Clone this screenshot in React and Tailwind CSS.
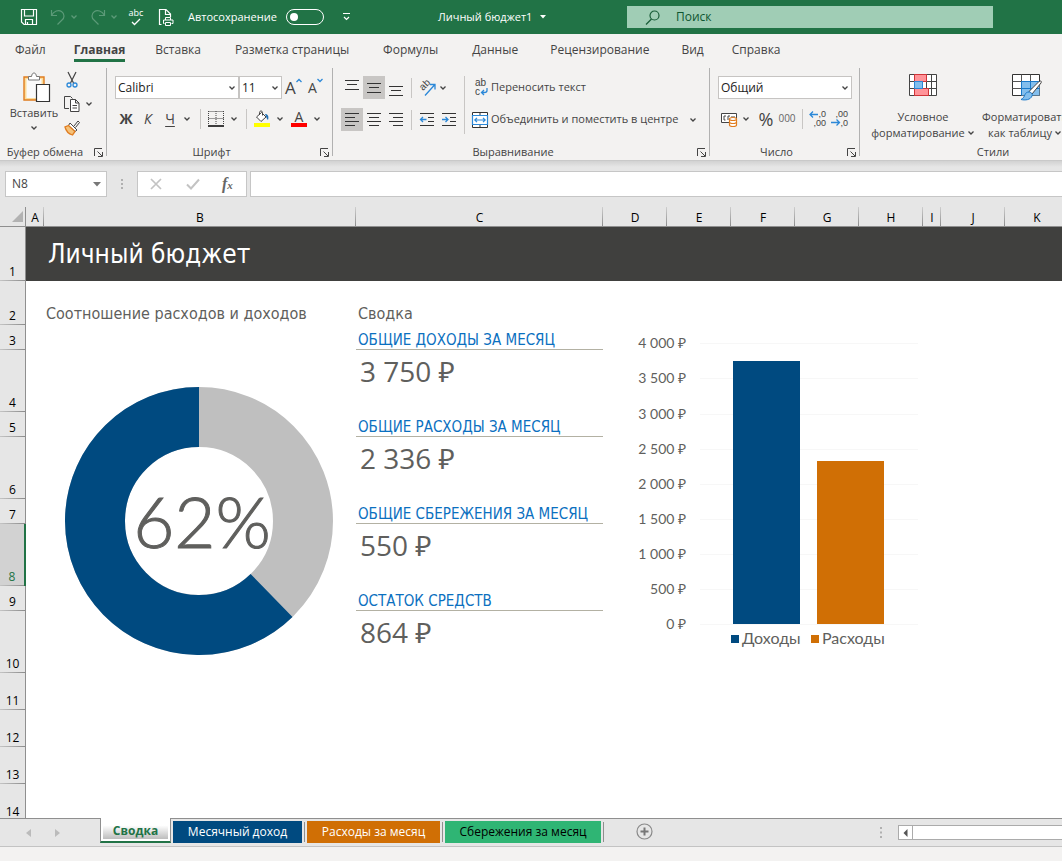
import React from "react";

const TABS = [
  ["Файл", "mr-7"],
  ["Главная", "mr-[30px]"],
  ["Вставка", "mr-[34px]"],
  ["Разметка страницы", "mr-[34px]"],
  ["Формулы", "mr-[34px]"],
  ["Данные", "mr-8"],
  ["Рецензирование", "mr-8"],
  ["Вид", "mr-7"],
  ["Справка", ""],
];

const COLUMNS = [
  ["A", "w-[18px]"],
  ["B", "w-[312px]"],
  ["C", "w-[247px]"],
  ["D", "w-[64px]"],
  ["E", "w-[64px]"],
  ["F", "w-[64px]"],
  ["G", "w-[64px]"],
  ["H", "w-[64px]"],
  ["I", "w-[18px]"],
  ["J", "w-[64px]"],
  ["K", ""],
];

const SUMMARY = [
  ["ОБЩИЕ ДОХОДЫ ЗА МЕСЯЦ", "3 750 ₽"],
  ["ОБЩИЕ РАСХОДЫ ЗА МЕСЯЦ", "2 336 ₽"],
  ["ОБЩИЕ СБЕРЕЖЕНИЯ ЗА МЕСЯЦ", "550 ₽"],
  ["ОСТАТОК СРЕДСТВ", "864 ₽"],
];

const AXIS = ["4 000 ₽", "3 500 ₽", "3 000 ₽", "2 500 ₽", "2 000 ₽", "1 500 ₽", "1 000 ₽", "500 ₽", "0 ₽"];

function Icon({ w = 16, h = 16, children, className = "" }) {
  return (
    <svg width={w} height={h} viewBox={`0 0 ${w} ${h}`} fill="none" aria-hidden="true" className={`shrink-0 overflow-visible ${className}`}>
      {children}
    </svg>
  );
}

function Chevron({ className = "text-[#444]" }) {
  return (
    <Icon w={8} h={6} className={className}>
      <path d="M1.5 1.5 4 4l2.5-2.5" stroke="currentColor" strokeWidth="1.3" />
    </Icon>
  );
}

function Launcher({ label }) {
  return (
    <button aria-label={label} className="flex h-4 w-4 shrink-0 items-center justify-center">
      <Icon w={9} h={9}>
        <path d="M.5 8V.5H8M3.5 3.5 8 8M8.5 4v4.5H4" stroke="#444" />
      </Icon>
    </button>
  );
}

function Group({ title, width, children, last }) {
  return (
    <section className={`flex shrink-0 items-center ${width}`}>
      <div className="flex h-[96px] min-w-0 flex-1 flex-col pt-1">
        <div className="flex-1">{children}</div>
        <div className="flex h-4 items-center">
          <span className="flex-1 text-center text-[11px] leading-4">{title}</span>
          {!last && <Launcher label={`Параметры: ${title}`} />}
        </div>
      </div>
      {!last && <span className="h-[88px] w-px bg-[#b1b1b1]" />}
    </section>
  );
}

function Divider({ className = "h-[20px] bg-[#c8c6c4]" }) {
  return <span className={`w-px shrink-0 ${className}`} />;
}

function Lines({ rows }) {
  return (
    <Icon w={14} h={16}>
      {rows.map(([y, x, w]) => (
        <rect key={y} x={x} y={y} width={w} height="1" fill="#333" />
      ))}
    </Icon>
  );
}

function IconButton({ label, active, children }) {
  return (
    <button aria-label={label} aria-pressed={active} className={`flex h-[23px] w-[22px] shrink-0 items-center justify-center ${active ? "bg-[#c8c6c4]" : ""}`}>
      {children}
    </button>
  );
}

function DropSelect({ label, value, width }) {
  return (
    <span className={`relative flex h-[23px] ${width}`}>
      <select aria-label={label} defaultValue={value} className="h-full w-full appearance-none border border-[#c6c4c2] bg-white pl-[2px] text-xs text-[#222] outline-none">
        <option>{value}</option>
      </select>
      <span className="pointer-events-none absolute right-[3px] top-[9px]">
        <Chevron />
      </span>
    </span>
  );
}

function TitleBar() {
  return (
    <header className="flex h-[34px] shrink-0 items-center overflow-hidden whitespace-nowrap bg-[#217346] text-[11px] text-white">
      <div className="flex w-[438px] shrink-0 items-center pl-[21px]">
        <button aria-label="Сохранить">
          <Icon>
            <path d="M.5.5h15v15H3L.5 13V.5ZM3.5.5V7h9V.5M4.500 15.500v-5h7v5M6.500 15.500v-2.500" stroke="white" strokeWidth="1.200" />
          </Icon>
        </button>
        <button aria-label="Отменить" className="ml-[13px] flex items-center gap-1 text-[#5c9a78]">
          <Icon>
            <path d="M1.500 1v5.500H7M1.500 6.500C4 2 8.500.5 11.500 2.500c3.500 2.400 3 6.500.5 8.500l-4.500 4.500" stroke="currentColor" strokeWidth="1.200" />
          </Icon>
          <Chevron className="text-[#5c9a78]" />
        </button>
        <button aria-label="Вернуть" className="ml-3 flex items-center gap-1 text-[#5c9a78]">
          <Icon>
            <path d="M14.500 1v5.500H9M14.500 6.500C12 2 7.500.5 4.500 2.500 1 4.900 1.500 9 4 11l4.500 4.500" stroke="currentColor" strokeWidth="1.200" />
          </Icon>
          <Chevron className="text-[#5c9a78]" />
        </button>
        <button aria-label="Орфография" className="ml-2 flex w-[20px] flex-col items-center">
          <span className="text-[9px] leading-[10px]">abc</span>
          <Icon w={10} h={8}>
            <path d="M1 4l2.500 2.500L9 1" stroke="white" strokeWidth="1.300" />
          </Icon>
        </button>
        <button aria-label="Предварительный просмотр" className="ml-3">
          <Icon w={16} h={17}>
            <path d="M3.500 15.500h-2V.5h6.500L12.500 5v3M7.500.5v5h5" stroke="white" strokeWidth="1.200" />
            <path d="M6.500 14.500h-1V11h9.500v3.500h-1.500M7.500 11V8.500h5V11M7.500 13.500h5v3h-5z" stroke="white" />
          </Icon>
        </button>
        <label htmlFor="autosave" className="ml-[14px] w-[98px]">Автосохранение</label>
        <input
          id="autosave"
          type="checkbox"
          role="switch"
          className="relative h-4 w-[38px] shrink-0 appearance-none rounded-full border border-white before:absolute before:left-[3px] before:top-[3px] before:h-2 before:w-2 before:rounded-full before:bg-white"
        />
        <button aria-label="Настройка панели" className="ml-[18px]">
          <Icon w={9} h={8}>
            <path d="M1 .5h7M2 4l2.500 2.500L7 4" stroke="white" strokeWidth="1.200" />
          </Icon>
        </button>
      </div>
      <button className="flex w-[189px] shrink-0 items-center gap-2">
        <span>Личный бюджет1</span>
        <Icon w={6} h={4}>
          <path d="M0 0h6L3 3.500z" fill="white" />
        </Icon>
      </button>
      <label className="mr-[69px] flex h-[22px] min-w-0 flex-1 items-center gap-4 bg-[#a0cdb5] pl-[18px]">
        <Icon w={15} h={15}>
          <circle cx="9.500" cy="5.500" r="4.500" stroke="#185c37" strokeWidth="1.200" />
          <path d="M6.500 9 1 14.500" stroke="#185c37" strokeWidth="1.200" />
        </Icon>
        <input type="search" aria-label="Поиск" placeholder="Поиск" className="min-w-0 flex-1 bg-transparent text-xs outline-none placeholder:text-[#0f5530] placeholder:opacity-100" />
      </label>
    </header>
  );
}

function RibbonTabs() {
  return (
    <nav className="flex h-[30px] shrink-0 overflow-hidden whitespace-nowrap pl-[15px] text-xs leading-4">
      {TABS.map(([name, gap]) => (
        <a key={name} href="#" className={`mb-[2px] pt-2 ${gap} ${name === "Главная" ? "border-b-[3px] border-[#217346] font-bold" : ""}`}>
          {name}
        </a>
      ))}
    </nav>
  );
}

function ClipboardGroup() {
  return (
    <div className="flex pl-[9px] pt-[4px]">
      <button className="flex w-[50px] flex-col items-center text-[11px] leading-4">
        <Icon w={28} h={31} className="ml-[6px]">
          <path d="M1 5h20v23H1z" fill="#fbdc9a" stroke="#e07c1f" strokeWidth="1.400" />
          <path d="M3.500 7h15v19h-15z" fill="#fafafa" />
          <path d="M5.500 8V4.500h3C9 2 9.500 1 11 1s2 1 2.500 3.500h3V8z" fill="#fff" stroke="#777" />
          <path d="M13.500 12.500h13v17h-13z" fill="#fff" stroke="#333" strokeWidth="1.200" />
        </Icon>
        <span className="mt-[2px]">Вставить</span>
        <span className="mt-1"><Chevron /></span>
      </button>
      <div className="ml-[5px] flex flex-col gap-2">
        <button aria-label="Вырезать" className="h-4">
          <Icon>
            <path d="M4 0l5.500 11M12 0 6.500 11" stroke="#444" strokeWidth="1.200" />
            <circle cx="5" cy="13" r="2" stroke="#2b88d8" strokeWidth="1.300" />
            <circle cx="11" cy="13" r="2" stroke="#2b88d8" strokeWidth="1.300" />
          </Icon>
        </button>
        <button aria-label="Копировать" className="flex h-4 items-center gap-[5px]">
          <Icon>
            <path d="M5 12.500H.5V.5h6l2 2" stroke="#444" />
            <path d="M6.500 3.500h5l3.500 3.500v8.500H6.500zM11.500 3.500V7H15M8.500 9.500h4.500M8.500 12h4.500" fill="#fff" stroke="#444" />
          </Icon>
          <Chevron />
        </button>
        <button aria-label="Формат по образцу" className="h-4">
          <Icon>
            <path d="M10 6l4-5 1.500 1.500-4 5" stroke="#444" />
            <path d="M6 3l7 7-2 1.500-6.500-6z" fill="#fff" stroke="#444" />
            <path d="M4.500 5.500 1 7c1 4 4 7 7.500 8l2.500-3.500z" fill="#f5c27a" stroke="#e07c1f" strokeWidth="1.300" />
          </Icon>
        </button>
      </div>
    </div>
  );
}

function FontGroup() {
  return (
    <div className="flex flex-col gap-2 pl-2 pt-2">
      <div className="flex items-center">
        <DropSelect label="Шрифт" value="Calibri" width="w-[124px]" />
        <DropSelect label="Размер шрифта" value="11" width="w-[43px]" />
        <button aria-label="Увеличить размер шрифта" className="ml-[3px] flex w-[18px] text-[17px] leading-5">
          A<Icon w={6} h={5}><path d="M.5 4 3 1.500 5.500 4" stroke="#2b88d8" strokeWidth="1.300" /></Icon>
        </button>
        <button aria-label="Уменьшить размер шрифта" className="ml-[5px] flex text-sm leading-5">
          A<Icon w={6} h={5}><path d="M.5 1 3 3.500 5.500 1" stroke="#2b88d8" strokeWidth="1.300" /></Icon>
        </button>
      </div>
      <div className="flex h-[23px] items-center text-sm">
        <button aria-label="Полужирный" className="w-[22px] font-bold">Ж</button>
        <button aria-label="Курсив" className="w-[22px] italic">К</button>
        <button aria-label="Подчёркнутый" className="w-[22px] underline underline-offset-2">Ч</button>
        <span className="ml-[2px] flex w-[17px]"><Chevron /></span>
        <Divider />
        <button aria-label="Границы" className="ml-[7px] flex items-center gap-[6px]">
          <Icon>
            <path d="M.5.5h15M.5 7.500h15M.5 0v14M8 0v14M15.500 0v14" stroke="#444" strokeDasharray="1 1" />
            <path d="M0 15h16" stroke="#000" strokeWidth="1.500" />
          </Icon>
          <Chevron />
        </button>
        <span className="w-2" />
        <Divider />
        <button aria-label="Цвет заливки" className="ml-[7px] flex items-center gap-[6px]">
          <Icon w={16} h={17}>
            <path d="M7.500 2.500 12 7l-5 4.500L2.500 7z" fill="#fff" stroke="#444" />
            <path d="M5.500 5V2.500C5.500.5 8.500.5 8.500 2.500v3" stroke="#444" />
            <path d="M11 4c3 0 4 2.500 3 6-1.500-1-1.500-3-3-6z" fill="#1f6fb5" />
            <path d="M0 13h16v4H0z" fill="#ff0" />
          </Icon>
          <Chevron />
        </button>
        <button aria-label="Цвет текста" className="ml-[7px] flex items-center gap-[6px]">
          <span className="flex w-4 flex-col items-center">
            <span className="text-sm leading-[13px]">A</span>
            <span className="h-1 w-4 bg-[#f00]" />
          </span>
          <Chevron />
        </button>
      </div>
    </div>
  );
}

function AlignGroup() {
  return (
    <div className="flex pl-2 pt-2">
      <div className="flex w-[123px] flex-col gap-[9px]">
        <div className="flex items-center">
          <IconButton label="По верхнему краю"><Lines rows={[[0, 0, 14], [4, 2, 10], [9, 0, 14]]} /></IconButton>
          <IconButton label="По середине" active><Lines rows={[[3, 0, 14], [7, 2, 10], [12, 0, 14]]} /></IconButton>
          <IconButton label="По нижнему краю"><Lines rows={[[6, 0, 14], [10, 2, 10], [15, 0, 14]]} /></IconButton>
          <span className="w-[4px]" />
          <Divider />
          <button aria-label="Ориентация" className="ml-[7px] flex items-center gap-[3px]">
            <Icon w={17} h={16}>
              <text x="0" y="0" transform="translate(4 11) rotate(-45)" fontSize="10" fill="#444" fontFamily="Liberation Sans">ab</text>
              <path d="M6 15.500 15.500 5M11 4.500h5v5" stroke="#2b88d8" strokeWidth="1.300" />
            </Icon>
            <Chevron />
          </button>
        </div>
        <div className="flex items-center">
          <IconButton label="По левому краю" active><Lines rows={[[1, 0, 14], [5, 0, 10], [9, 0, 14], [13, 0, 10]]} /></IconButton>
          <IconButton label="По центру"><Lines rows={[[1, 0, 14], [5, 2, 10], [9, 0, 14], [13, 2, 10]]} /></IconButton>
          <IconButton label="По правому краю"><Lines rows={[[1, 0, 14], [5, 4, 10], [9, 0, 14], [13, 4, 10]]} /></IconButton>
          <span className="w-[4px]" />
          <Divider />
          <span className="w-1" />
          <IconButton label="Уменьшить отступ">
            <Icon w={14} h={16}>
              <path d="M0 1.500h14M8 5.500h6M8 9.500h6M0 13.500h14" stroke="#333" />
              <path d="M.5 7.500h6M3 5 .5 7.500 3 10" stroke="#2b88d8" strokeWidth="1.300" />
            </Icon>
          </IconButton>
          <IconButton label="Увеличить отступ">
            <Icon w={14} h={16}>
              <path d="M0 1.500h14M8 5.500h6M8 9.500h6M0 13.500h14" stroke="#333" />
              <path d="M0 7.500h6M3.500 5 6 7.500 3.500 10" stroke="#2b88d8" strokeWidth="1.300" />
            </Icon>
          </IconButton>
        </div>
      </div>
      <Divider className="h-[58px] bg-[#c8c6c4]" />
      <div className="ml-[7px] flex flex-col gap-[9px] text-[11px]">
        <button className="flex h-[23px] items-center gap-[3px]">
          <Icon>
            <text x="3" y="6" fontSize="10" fill="#444" fontFamily="Liberation Sans">ab</text>
            <text x="3" y="15" fontSize="10" fill="#444" fontFamily="Liberation Sans">c</text>
            <path d="M15 8v2.500c0 1.500-1 2-2.500 2H9.500M12 10l-2.500 2.500L12 15" stroke="#2b88d8" strokeWidth="1.300" />
          </Icon>
          Переносить текст
        </button>
        <button className="flex h-[23px] items-center gap-[3px]">
          <Icon>
            <path d="M.5.5h15v15H.5zM8 0v3M8 13v3" fill="#fff" stroke="#333" />
            <path d="M.5 3.500h15v9H.5z" fill="#fff" stroke="#2b88d8" strokeWidth="1.200" />
            <path d="M3 8h10M5 5.800 2.800 8 5 10.200M11 5.800 13.200 8 11 10.200" stroke="#2b88d8" strokeWidth="1.200" />
          </Icon>
          <span className="w-[195px] text-left">Объединить и поместить в центре</span>
          <Chevron />
        </button>
      </div>
    </div>
  );
}

function NumberGroup() {
  return (
    <div className="flex flex-col gap-2 pl-2 pt-2">
      <DropSelect label="Числовой формат" value="Общий" width="w-[134px]" />
      <div className="flex h-[23px] items-center">
        <button aria-label="Финансовый формат" className="ml-[3px] flex items-center gap-[4px]">
          <Icon w={17} h={16}>
            <path d="M.5 2.500h15v9H.5z" fill="#fff" stroke="#444" />
            <path d="M5 5H3v4h1.500M7 9V5h2M11 5v2M13 5v2" stroke="#444" />
            <path d="M8.500 8v6c0 2 7 2 7 0V8z" fill="#fff" stroke="#e07c1f" strokeWidth="1.200" />
            <ellipse cx="12" cy="8" rx="3.500" ry="1.500" fill="#fff" stroke="#e07c1f" strokeWidth="1.200" />
            <path d="M8.500 11c0 2 7 2 7 0" stroke="#e07c1f" strokeWidth="1.200" />
          </Icon>
          <Chevron />
        </button>
        <button aria-label="Процентный формат" className="ml-[6px] w-[20px] text-lg">%</button>
        <button aria-label="Формат с разделителями" className="w-[22px] text-[10px] text-[#666]">000</button>
        <span className="w-[4px]" />
        <Divider />
        <button aria-label="Увеличить разрядность" className="ml-[6px]">
          <Icon w={17} h={17}>
            <text x="17" y="7" textAnchor="end" fontSize="9" fill="#444" fontFamily="Liberation Sans">,0</text>
            <text x="17" y="16" textAnchor="end" fontSize="9" fill="#444" fontFamily="Liberation Sans">,00</text>
            <path d="M1 4.500h8M4 1.500l-3 3 3 3" stroke="#2b88d8" strokeWidth="1.300" />
          </Icon>
        </button>
        <button aria-label="Уменьшить разрядность" className="ml-[5px]">
          <Icon w={17} h={17}>
            <text x="17" y="7" textAnchor="end" fontSize="9" fill="#444" fontFamily="Liberation Sans">,00</text>
            <text x="17" y="16" textAnchor="end" fontSize="9" fill="#444" fontFamily="Liberation Sans">,0</text>
            <path d="M0 12.500h8M5.500 9.500l3 3-3 3" stroke="#2b88d8" strokeWidth="1.300" />
          </Icon>
        </button>
      </div>
    </div>
  );
}

function StylesGroup() {
  return (
    <div className="flex pl-2 pt-[5px] text-[11px] leading-4">
      <button className="flex w-[110px] flex-col items-center">
        <Icon w={28} h={24}>
          <path d="M.5 1.500h27v21H.5zM.5 8.500h27M.5 15.500h27M5.500 1.500v21M17.500 1.500v21M22.500 1.500v21" fill="#fff" stroke="#444" />
          <path d="M5.500 1.500h12v7h-12zM5.500 15.500h14v7h-14z" fill="#ff9499" stroke="#d13438" />
          <path d="M5.500 8.500h8v7h-8z" fill="#83beec" stroke="#2b88d8" />
        </Icon>
        <span className="mt-3">Условное</span>
        <span className="flex items-center gap-[2px]">форматирование <Chevron /></span>
      </button>
      <button className="flex w-[94px] flex-col items-center">
        <Icon w={32} h={28} className="-mb-1 ml-1">
          <path d="M1.500 1.500h27v21h-27z" fill="#fff" stroke="#333" />
          <path d="M10.500 8.500h18v14h-18z" fill="#83beec" />
          <path d="M1.500 8.500h27M1.500 15.500h27M10.500 1.500v21M19.500 1.500v21" stroke="#555" />
          <path d="M10.500 8.500h18M10.500 15.500h18M10.500 8.500v14M19.500 8.500v14" stroke="#1979ca" />
          <path d="M29.500 8c1 0 1 1 .5 2L21 21l-3-2.500L28 8.500z" fill="#fff" stroke="#444" />
          <path d="M18 19c2 0 4 2 3 4-1.500 4-7 4.500-11 3.500 3-1.500 3-3 4-5 .8-1.700 2-2.500 4-2.500z" fill="#83beec" stroke="#1979ca" />
        </Icon>
        <span className="mt-3">Форматировать</span>
        <span className="flex items-center gap-[2px]">как таблицу <Chevron /></span>
      </button>
    </div>
  );
}

function FormulaBar() {
  return (
    <div className="flex h-[47px] shrink-0 items-start border-t border-[#c9c9c9] bg-[linear-gradient(to_bottom,#d2d2d2,#e6e6e6_6px)] pl-[5px] pt-[10px]">
      <label className="flex h-[26px] w-[102px] shrink-0 items-center border border-[#c6c6c6] bg-white px-[6px]">
        <input aria-label="Поле имени" defaultValue="N8" className="w-[81px] bg-transparent text-xs text-[#444] outline-none" />
        <Icon w={8} h={5}><path d="M0 0h8L4 4.500z" fill="#777" /></Icon>
      </label>
      <Icon w={30} h={26}>
        <path d="M14 8h2v2h-2zM14 12h2v2h-2zM14 16h2v2h-2z" fill="#b0b0b0" />
      </Icon>
      <div className="flex h-[26px] w-[110px] shrink-0 items-center border border-[#c6c6c6] bg-white pl-[12px]">
        <button aria-label="Отмена"><Icon w={12} h={12}><path d="M1 1l10 10M11 1 1 11" stroke="#c3c3c3" strokeWidth="1.700" /></Icon></button>
        <button aria-label="Ввод" className="ml-6"><Icon w={14} h={12}><path d="M1 6.500 5 10.500 13 1.500" stroke="#c3c3c3" strokeWidth="2" /></Icon></button>
        <button aria-label="Вставить функцию" className="ml-[22px] font-['Liberation_Serif',serif] text-base font-bold italic leading-5 text-[#666]">f<span className="text-[11px]">x</span></button>
      </div>
      <input aria-label="Строка формул" className="ml-[3px] h-[26px] min-w-0 flex-1 border border-r-0 border-[#c6c6c6] bg-white px-2 text-xs outline-none" />
    </div>
  );
}

function DonutChart() {
  return (
    <svg width="312" height="348" viewBox="0 0 312 348" role="img" aria-label="Соотношение расходов и доходов" className="block">
      <circle cx="155" cy="196" r="104" fill="none" stroke="#bfbfbf" strokeWidth="60" />
      <circle cx="155" cy="196" r="104" fill="none" stroke="#004a80" strokeWidth="60" pathLength="100" strokeDasharray="62.290 37.710" transform="rotate(45.760 155 196)" />
      <text x="158" y="223" textAnchor="middle" fontFamily="Lato, sans-serif" fontWeight="300" fontSize="71" fill="#5f5f5d" stroke="#5f5f5d" strokeWidth="1">62%</text>
    </svg>
  );
}

function BarChart() {
  return (
    <svg width="320" height="348" viewBox="0 0 320 348" role="img" aria-label="Доходы и расходы" className="block">
      {AXIS.map((label, i) => {
        const y = Math.round(18.3 + i * 35.125);
        return (
          <g key={label}>
            <rect x="97" y={y} width="218" height="1" fill="#f7f7f7" />
            <text x="83" y={y + 5} textAnchor="end" fontFamily="Lato, 'Open Sans', sans-serif" fontSize="14" fill="#5f5f5d">{label}</text>
          </g>
        );
      })}
      <rect x="130" y="36" width="67" height="263" fill="#004a80" />
      <rect x="214" y="136" width="67" height="163" fill="#d06f05" />
      <rect x="128" y="310" width="8" height="8" fill="#004a80" />
      <text x="139" y="319" fontFamily="Lato, sans-serif" fontSize="16" fill="#5f5f5d">Доходы</text>
      <rect x="208" y="310" width="8" height="8" fill="#d06f05" />
      <text x="219" y="319" fontFamily="Lato, sans-serif" fontSize="16" fill="#5f5f5d">Расходы</text>
    </svg>
  );
}

function RowHead({ n, active }) {
  return (
    <th
      scope="row"
      className={`border-r bg-[linear-gradient(to_right,#c4c4c4,#8c8c8c)] bg-[length:100%_1px] bg-bottom bg-no-repeat p-0 text-center align-bottom text-xs font-normal ${
        active ? "border-r-2 border-[#217346] bg-[#d2d2d2] text-[#217346]" : "border-[#8f8f8f] bg-[#e6e6e6] text-black"
      }`}
    >
      <span className="block pb-[1px] leading-4">{n}</span>
    </th>
  );
}

function Sheet() {
  return (
    <main className="min-h-0 flex-1 overflow-hidden bg-white">
      <table className="w-full min-w-[1069px] table-fixed border-separate border-spacing-0">
        <thead>
          <tr className="h-[20px]">
            <td className="w-[26px] border-b border-r border-[#8f8f8f] bg-[#e6e6e6] p-0">
              <Icon w={22} h={13} className="ml-auto"><path d="M20 1v11H9z" fill="#b2b2b2" /></Icon>
            </td>
            {COLUMNS.map(([name, width]) => (
              <th
                key={name}
                scope="col"
                className={`border-b border-[#8f8f8f] bg-[#e6e6e6] bg-[linear-gradient(to_bottom,#cfcfcf,#8c8c8c)] bg-[length:1px_100%] bg-right bg-no-repeat p-0 pt-[2px] text-center text-xs font-normal leading-4 text-black ${width}`}
              >
                {name}
              </th>
            ))}
          </tr>
        </thead>
        <tbody className="font-['Open_Sans','Noto_Sans',sans-serif]">
          <tr className="h-[54px]">
            <RowHead n={1} />
            <td className="bg-[#40403e]" />
            <td colSpan={10} className="bg-[#40403e] p-0 pl-1 font-['DejaVu_Sans_Condensed','Open_Sans',sans-serif] text-[26px] leading-8 text-white">Личный бюджет</td>
          </tr>
          <tr className="h-[44px]">
            <RowHead n={2} />
            <td />
            <td className="whitespace-nowrap p-0 pl-[2px] align-bottom font-['DejaVu_Sans_Condensed','Open_Sans',sans-serif] text-base leading-[22px] text-[#5f5f5d]">Соотношение расходов и доходов</td>
            <td className="p-0 pl-[2px] align-bottom font-['DejaVu_Sans_Condensed','Open_Sans',sans-serif] text-base leading-[22px] text-[#5f5f5d]">Сводка</td>
            <td colSpan={8} />
          </tr>
          {SUMMARY.map(([label, value], i) => (
            <React.Fragment key={label}>
              <tr className="h-[25px]">
                <RowHead n={3 + i * 2} />
                <td />
                {i === 0 && <td rowSpan={8} className="p-0"><DonutChart /></td>}
                <td className="whitespace-nowrap border-b border-[#b3b1a3] p-0 pl-[2px] align-bottom font-['DejaVu_Sans_Condensed','Open_Sans',sans-serif] text-[15px] leading-[18px] text-[#0b70c0]">{label}</td>
                {i === 0 && <td colSpan={5} rowSpan={8} className="p-0"><BarChart /></td>}
                <td colSpan={3} />
              </tr>
              <tr className="h-[62px]">
                <RowHead n={4 + i * 2} active={i === 2} />
                <td />
                <td className="p-0 pl-1 pt-[1px] align-top text-[28px] leading-10 text-[#5f5f5d]">{value}</td>
                <td colSpan={3} />
              </tr>
            </React.Fragment>
          ))}
          {[11, 12, 13, 14].map((n) => (
            <tr key={n} className="h-[37px]">
              <RowHead n={n} />
              <td colSpan={11} />
            </tr>
          ))}
        </tbody>
      </table>
    </main>
  );
}

function SheetTabs() {
  return (
    <footer className="shrink-0">
      <div className="flex h-[29px] items-start overflow-hidden whitespace-nowrap border-b border-[#c3c3c3] bg-[#e6e6e6] text-xs">
        <div className="flex h-full w-[100px] shrink-0 items-center border-t border-[#8f8f8f] pl-[26px]">
          <button aria-label="Предыдущий лист"><Icon w={5} h={8}><path d="M5 0v8L0 4z" fill="#bbb" /></Icon></button>
          <button aria-label="Следующий лист" className="ml-6"><Icon w={5} h={8}><path d="M0 0v8l5-4z" fill="#bbb" /></Icon></button>
        </div>
        <button className="h-[25px] w-[71px] shrink-0 border-x border-b-2 border-x-[#8f8f8f] border-b-[#217346] bg-white px-[2px] pb-[2px] pt-1 font-bold text-[#217346]">
          <span className="block h-[17px] bg-[linear-gradient(to_bottom,#fff_20%,#bdbdbd)] leading-[17px]">Сводка</span>
        </button>
        <div className="flex h-full min-w-0 flex-1 items-start border-t border-[#8f8f8f] pt-[2px]">
          <button className="ml-[2px] h-[22px] w-[129px] shrink-0 bg-[#004a80] text-white">Месячный доход</button>
          <Divider className="mx-[2px] mt-px h-[20px] bg-[#8f8f8f]" />
          <button className="h-[22px] w-[133px] shrink-0 bg-[#d06f05] text-white">Расходы за месяц</button>
          <Divider className="mx-[2px] mt-px h-[20px] bg-[#8f8f8f]" />
          <button className="h-[22px] w-[156px] shrink-0 bg-[#2fb574] text-black">Сбережения за месяц</button>
          <Divider className="mx-[2px] mt-px h-[20px] bg-[#8f8f8f]" />
          <button aria-label="Новый лист" className="ml-[30px] mt-[2px]">
            <Icon w={17} h={17}>
              <circle cx="8.500" cy="8.500" r="7.500" stroke="#8a8a8a" strokeWidth="1.200" />
              <path d="M8.500 4.500v8M4.500 8.500h8" stroke="#777" strokeWidth="2" />
            </Icon>
          </button>
          <div className="ml-auto flex w-[183px] shrink-0 items-center pt-[3px]">
            <Icon w={19} h={17}><path d="M1 3h2v2H1zM1 7.500h2v2H1zM1 12h2v2H1z" fill="#b0b0b0" /></Icon>
            <button aria-label="Прокрутить влево" className="flex h-[15px] w-[15px] shrink-0 items-center justify-center border border-[#ababab] bg-white">
              <Icon w={5} h={8}><path d="M4.500 0v8L.5 4z" fill="#555" /></Icon>
            </button>
            <span className="h-[15px] flex-1 border-y border-[#ababab] bg-white" />
          </div>
        </div>
      </div>
      <div className="h-[14px] bg-[#f3f2f1]" />
    </footer>
  );
}

export default function App() {
  return (
    <div className="flex h-screen w-full flex-col overflow-hidden bg-[#f3f2f1] font-['Open_Sans','Noto_Sans',sans-serif] text-[#444]">
      <TitleBar />
      <RibbonTabs />
      <div className="flex h-[96px] shrink-0 overflow-hidden whitespace-nowrap">
        <Group title="Буфер обмена" width="w-[107px]"><ClipboardGroup /></Group>
        <Group title="Шрифт" width="w-[226px]"><FontGroup /></Group>
        <Group title="Выравнивание" width="w-[377px]"><AlignGroup /></Group>
        <Group title="Число" width="w-[150px]"><NumberGroup /></Group>
        <Group title="Стили" width="w-[266px]" last><StylesGroup /></Group>
      </div>
      <FormulaBar />
      <Sheet />
      <SheetTabs />
    </div>
  );
}
